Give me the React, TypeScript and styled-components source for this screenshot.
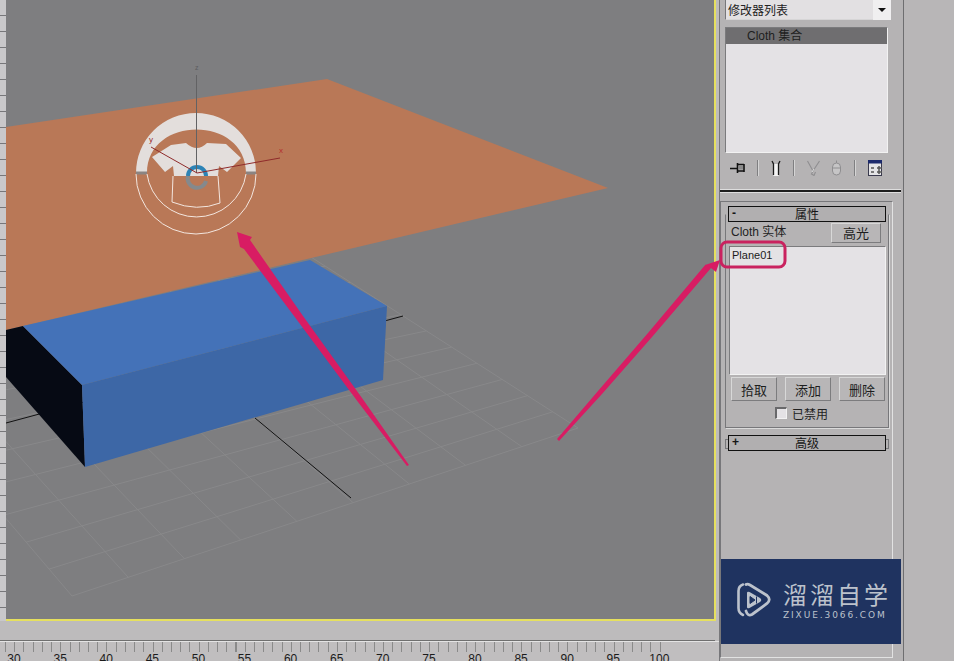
import * as React from "react";
import styled, { createGlobalStyle } from "styled-components";

const GlobalStyle = createGlobalStyle`
  html, body {
    margin: 0;
    padding: 0;
    width: 954px;
    height: 661px;
    overflow: hidden;
    background: #b8b6b7;
    font-family: "Liberation Sans", "Noto Sans CJK SC", sans-serif;
  }
`;

const Base = styled.div`
  position: relative;
  width: 954px;
  height: 661px;
  display: flex;
  overflow: hidden;
  background: #b8b6b7;
`;

const Workspace = styled.div`
  width: 719px;
  display: flex;
  flex-direction: column;
  background: #bdbbbc;
`;

const ViewRow = styled.div`
  display: flex;
  height: 621px;
`;

const SideRuler = styled.div`
  width: 6px;
  background: repeating-linear-gradient(
    to bottom,
    #c9c8ca 0,
    #c9c8ca 15px,
    #77777a 15px,
    #77777a 16px
  );
`;

const Viewport = styled.div`
  width: 708px;
  height: 619px;
  background: #7e7e80;
  border-right: 2px solid #e6e05e;
  border-bottom: 2px solid #e6e05e;
`;

const SceneSvg = styled.svg`
  display: block;
`;

const TrackGap = styled.div`
  height: 19px;
  margin-right: 4px;
  border-bottom: 1px solid #6f6f6f;
`;

const Timeline = styled.div`
  height: 20px;
  overflow: hidden;
  border-top: 1px solid #e4e4e4;
  background: #c0bebf;
`;

const Ticks = styled.div`
  width: 658px;
  height: 10px;
  margin-left: 5px;
  background: repeating-linear-gradient(
    to right,
    #8a8a8a 0,
    #8a8a8a 1px,
    transparent 1px,
    transparent 9.22px
  );
`;

const Labels = styled.div`
  display: flex;
  margin-left: -9px;
`;

const Label = styled.span`
  width: 46.1px;
  flex: none;
  text-align: center;
  font-size: 12px;
  line-height: 14px;
  color: #1b1b1b;
`;

const Panel = styled.div`
  position: relative;
  width: 185px;
  height: 661px;
  box-sizing: border-box;
  padding-bottom: 3px;
  display: flex;
  flex-direction: column;
  background: #b5b3b4;
  border-left: 1px solid #77777a;
  border-right: 1px solid #6e6e70;
`;

const TopSection = styled.div`
  padding-left: 5px;
`;

const Select = styled.div`
  width: 166px;
  height: 20px;
  box-sizing: border-box;
  display: flex;
  align-items: center;
  justify-content: space-between;
  padding-left: 2px;
  background: #e2e0e2;
  border-left: 1px solid #77777a;
  border-bottom: 1px solid #d6d5d6;
  font-size: 12px;
  color: #222;
`;

const SelectArrow = styled.span`
  width: 18px;
  height: 20px;
  display: flex;
  align-items: center;
  justify-content: center;
  background: #f0eff0;

  &::before {
    content: "";
    border-left: 4px solid transparent;
    border-right: 4px solid transparent;
    border-top: 4px solid #111;
  }
`;

const ListBox = styled.div<{ $height: number; $width: number }>`
  width: ${(p) => p.$width}px;
  height: ${(p) => p.$height}px;
  box-sizing: border-box;
  background: #e4e2e5;
  border: 1px solid;
  border-color: #7b7b7d #f2f2f2 #f2f2f2 #7b7b7d;
`;

const StackList = styled(ListBox)`
  margin-top: 7px;
`;

const StackRow = styled.div`
  height: 16px;
  padding-left: 21px;
  background: #6f6e70;
  font-size: 12px;
  line-height: 17px;
  color: #1e1e1e;
`;

const IconRow = styled.div`
  height: 16px;
  margin-top: 7px;
  padding-left: 5px;
  display: flex;
  align-items: center;
`;

const IconSep = styled.span`
  width: 1px;
  height: 16px;
  margin: 0 12px;
  background: #7f7f81;
  border-right: 1px solid #d5d5d5;
`;

const IconPair = styled.span`
  display: flex;
  gap: 11px;
`;

const Divider = styled.div`
  width: 181px;
  height: 2px;
  margin-top: 13px;
  background: #1e1e1e;
  border-top: 1px solid #dedede;
  border-bottom: 1px solid #dedede;
`;

const RolloutArea = styled.div`
  width: 173px;
  flex: 1;
  margin-top: 8px;
  box-sizing: border-box;
  padding: 4px 3px 0 4px;
  border: 1px solid #77777a;
  border-right-color: #e2e2e2;
  border-bottom-color: #e2e2e2;
`;

const RolloutHeader = styled.div<{ $collapsed?: boolean }>`
  position: relative;
  height: 16px;
  margin: 0 3px;
  box-sizing: border-box;
  padding: 0 3px 2px;
  display: flex;
  align-items: center;
  background: #b1afb0;
  border: 1px solid #111;
  font-size: 12px;
  color: #161616;

  ${(p) =>
    p.$collapsed &&
    `
    margin-top: 7px;
    &::before, &::after {
      content: "";
      position: absolute;
      top: 3px;
      width: 2px;
      height: 8px;
      border: 1px solid #77777a;
    }
    &::before { left: -4px; border-right: 0; }
    &::after { right: -4px; border-left: 0; }
  `}
`;

const HeaderSign = styled.span`
  width: 10px;
  font-weight: bold;
`;

const HeaderTitle = styled.span`
  flex: 1;
  text-align: center;
  padding-right: 10px;
`;

const GroupBox = styled.div`
  height: 214px;
  margin-top: -8px;
  box-sizing: border-box;
  padding: 8px 3px 0;
  border: 1px solid #77777a;
  border-top-color: #b5b3b4;
  box-shadow: 1px 1px 0 #dadada;
`;

const NodeHead = styled.div`
  height: 20px;
  padding: 0 4px 0 2px;
  display: flex;
  justify-content: space-between;
  font-size: 12px;
  line-height: 19px;
  color: #222;
`;

const NodeList = styled(ListBox)`
  margin-top: 3px;
  padding: 1px 2px;
  font-size: 11px;
  line-height: 14px;
  color: #1b1b1b;
`;

const PanelButton = styled.div<{ $wide?: boolean }>`
  width: ${(p) => (p.$wide ? 50 : 46)}px;
  height: ${(p) => (p.$wide ? 20 : 24)}px;
  box-sizing: border-box;
  display: flex;
  align-items: center;
  justify-content: center;
  background: #b8b6b7;
  border: 1px solid;
  border-color: #d8d8d8 #7c7c7e #7c7c7e #d8d8d8;
  font-size: 13px;
  color: #1e1e1e;
`;

const ButtonRow = styled.div`
  margin-top: 2px;
  padding-left: 2px;
  display: flex;
  gap: 8px;
`;

const CheckRow = styled.div`
  height: 14px;
  margin-top: 5px;
  padding-left: 46px;
  display: flex;
  align-items: center;
  gap: 5px;
  font-size: 12px;
  color: #222;
`;

const CheckBox = styled.span`
  width: 12px;
  height: 12px;
  box-sizing: border-box;
  background: #e4e2e5;
  border: 1px solid;
  border-width: 2px 1px 1px 2px;
  border-color: #68686a #f2f2f2 #f2f2f2 #68686a;
`;

const Watermark = styled.div`
  position: absolute;
  left: 1px;
  top: 559px;
  width: 180px;
  height: 85px;
  box-sizing: border-box;
  padding: 0 0 3px 16px;
  display: flex;
  align-items: center;
  gap: 12px;
  background: #1f3360;
`;

const BrandText = styled.div`
  display: flex;
  flex-direction: column;
  gap: 1px;
  color: #bcc2cc;
`;

const BrandName = styled.div`
  font-family: "Noto Sans CJK SC", sans-serif;
  font-size: 24px;
  line-height: 30px;
  font-weight: 400;
  letter-spacing: 3px;
  white-space: nowrap;
`;

const BrandUrl = styled.div`
  font-family: "DejaVu Sans", sans-serif;
  font-size: 9px;
  line-height: 11px;
  letter-spacing: 1.9px;
  white-space: nowrap;
`;

const Overlay = styled.svg`
  position: absolute;
  left: 0;
  top: 0;
  pointer-events: none;
`;

const lerp = (a: number[], b: number[], t: number) => [
  a[0] + (b[0] - a[0]) * t,
  a[1] + (b[1] - a[1]) * t,
];

// corners of the floor grid, the far ones are hidden behind the plane
const gridA = [72, 596];
const gridB = [578, 428];
const gridC = [300, 250];
const gridD = [-180, 300];

function GridLines() {
  const lines: number[][][] = [];
  for (let i = 0; i <= 9; i++) {
    lines.push([lerp(gridA, gridB, i / 9), lerp(gridD, gridC, i / 9)]);
  }
  for (let i = 0; i <= 11; i++) {
    lines.push([lerp(gridA, gridD, i / 11), lerp(gridB, gridC, i / 11)]);
  }
  return (
    <g stroke="#959596" strokeWidth="1" opacity="0.45">
      {lines.map((l, i) => (
        <line key={i} x1={l[0][0]} y1={l[0][1]} x2={l[1][0]} y2={l[1][1]} />
      ))}
    </g>
  );
}

function Gizmo() {
  return (
    <g>
      <path d="M136 173 A60 60 0 0 1 256 173 H246 C246 115 147 115 147 173 Z" fill="#e3dedc" />
      <path d="M136 173 H147 M246 173 H256" stroke="#8b8482" strokeWidth="3" />
      <path d="M136 174 A60 60 0 0 0 256 174 M147 174 A50 50 0 0 0 246 174" fill="none" stroke="#f3e6df" strokeWidth="1" />
      <path
        d="M152 157 L171 145 L186 143 Q197 153 207 143 L226 144 L241 158 L227 172 L219 166 L218 176 H174 L173 166 L165 172 Z"
        fill="#e3dedc"
      />
      <path d="M173 176 L172 202 Q197 212 220 203 L218 176" fill="none" stroke="#f3e6df" strokeWidth="1" />
      <path d="M188 176 A9 9 0 0 1 206 176" fill="none" stroke="#2c83b6" strokeWidth="4" />
      <path d="M188 176 A9 9 0 0 0 206 181" fill="none" stroke="#85898c" strokeWidth="4" />
      <line x1="196.5" y1="75" x2="196.5" y2="173" stroke="#626264" />
      <line x1="197" y1="173" x2="280" y2="158" stroke="#8f2b2b" />
      <line x1="197" y1="173" x2="151" y2="147" stroke="#8f2b2b" />
      <text x="195" y="70" fontSize="7" fill="#5d5d5f" fontFamily="Liberation Sans">z</text>
      <text x="279" y="153" fontSize="8" fill="#b32e2e" fontFamily="Liberation Sans">x</text>
      <text x="149" y="142" fontSize="8" fill="#9c2b2b" fontFamily="Liberation Sans">y</text>
    </g>
  );
}

function Scene() {
  return (
    <SceneSvg width="708" height="619" viewBox="6 0 708 619">
      <GridLines />
      <line x1="6" y1="423" x2="403" y2="316" stroke="#111" />
      <line x1="255" y1="418" x2="351" y2="498" stroke="#111" />
      <polygon points="327,79 608,188 6,330 6,127" fill="#b97857" />
      <polygon points="6,330 23,326 82,385 85,467 6,377" fill="#060a14" />
      <polygon points="23,326 310,260 387,306 82,385" fill="#4472b8" />
      <polygon points="82,385 387,306 383,380 85,467" fill="#3d67a6" />
      <Gizmo />
    </SceneSvg>
  );
}

function PinIcon() {
  return (
    <svg width="15" height="12" viewBox="0 0 15 12">
      <path d="M0 6.5 H7 M7.5 1 V11 M14 2 V10 M8 2.5 H14 M8 9 H14" stroke="#111" strokeWidth="1.6" fill="none" />
      <rect x="9" y="3.5" width="4" height="4" fill="#8a8a8a" />
    </svg>
  );
}

function SplitIcon() {
  return (
    <svg width="10" height="16" viewBox="0 0 10 16">
      <rect x="2.5" y="4" width="5" height="12" fill="#f4f4f4" />
      <path d="M1 1 L2.5 4 V15 M9 1 L7.5 4 V15" stroke="#1a1a1a" strokeWidth="1.3" fill="none" />
    </svg>
  );
}

function FunnelIcon() {
  return (
    <svg width="13" height="16" viewBox="0 0 13 16">
      <path d="M0.5 1 L6 11 L12.5 1 M6 11 L4.5 14 L7 15.5 L8.5 12" stroke="#8f8e90" strokeWidth="1.1" fill="none" />
      <path d="M5 12 L7 9" stroke="#dedede" strokeWidth="1" />
    </svg>
  );
}

function MouseIcon() {
  return (
    <svg width="11" height="16" viewBox="0 0 11 16">
      <rect x="1.5" y="3" width="8" height="12" rx="4" fill="#c6c5c6" stroke="#8f8e90" />
      <path d="M1.5 8 H9.5 M5.5 0.5 V3" stroke="#8f8e90" fill="none" />
    </svg>
  );
}

function ConfigIcon() {
  return (
    <svg width="15" height="16" viewBox="0 0 15 16">
      <rect x="0.5" y="0.5" width="13" height="15" fill="#e4e4e6" stroke="#3a3a4e" />
      <rect x="0" y="0" width="14" height="3.5" fill="#1c2a6c" />
      <path d="M3 8 H6 M3 12 H6 M9 8 H14 M9 12 H14 M11 6 V14" stroke="#555" strokeWidth="1.5" />
    </svg>
  );
}

function LogoMark() {
  return (
    <svg width="34" height="36" viewBox="0 0 34 36">
      <path d="M6 2.5 Q1.5 4 1.5 9 V26 Q1.5 31 6 33" fill="none" stroke="#bcc2cc" strokeWidth="2.6" strokeLinecap="round" />
      <path
        d="M9 2.5 Q10.5 1.5 13 3 L30 13.5 Q34.5 17.5 30 21.5 L15 32.5 Q10.5 34.5 9 29"
        fill="none"
        stroke="#bcc2cc"
        strokeWidth="2.8"
        strokeLinecap="round"
      />
      <path d="M10 11 Q10 9 12.5 10 L23 16 Q25.5 18 23 20 L12.5 26 Q10 27 10 25 Z" fill="#bcc2cc" />
      <path d="M13 14.5 L18 18 L13 21.5 Z M19.5 14.5 V21.5" fill="#1f3360" stroke="#1f3360" strokeWidth="1" />
    </svg>
  );
}

const rulerLabels = [30, 35, 40, 45, 50, 55, 60, 65, 70, 75, 80, 85, 90, 95, 100];

export default function App() {
  return (
    <Base>
      <GlobalStyle />
      <Workspace>
        <ViewRow>
          <SideRuler />
          <Viewport>
            <Scene />
          </Viewport>
        </ViewRow>
        <TrackGap />
        <Timeline>
          <Ticks />
          <Labels>
            {rulerLabels.map((n) => (
              <Label key={n}>{n}</Label>
            ))}
          </Labels>
        </Timeline>
      </Workspace>
      <Panel>
        <TopSection>
          <Select>
            修改器列表
            <SelectArrow />
          </Select>
          <StackList $width={163} $height={126}>
            <StackRow>Cloth 集合</StackRow>
          </StackList>
          <IconRow>
            <PinIcon />
            <IconSep />
            <SplitIcon />
            <IconSep />
            <IconPair>
              <FunnelIcon />
              <MouseIcon />
            </IconPair>
            <IconSep />
            <ConfigIcon />
          </IconRow>
        </TopSection>
        <Divider />
        <RolloutArea>
          <RolloutHeader>
            <HeaderSign>-</HeaderSign>
            <HeaderTitle>属性</HeaderTitle>
          </RolloutHeader>
          <GroupBox>
            <NodeHead>
              Cloth 实体
              <PanelButton $wide>高光</PanelButton>
            </NodeHead>
            <NodeList $width={157} $height={129}>Plane01</NodeList>
            <ButtonRow>
              <PanelButton>拾取</PanelButton>
              <PanelButton>添加</PanelButton>
              <PanelButton>删除</PanelButton>
            </ButtonRow>
            <CheckRow>
              <CheckBox />
              已禁用
            </CheckRow>
          </GroupBox>
          <RolloutHeader $collapsed>
            <HeaderSign>+</HeaderSign>
            <HeaderTitle>高级</HeaderTitle>
          </RolloutHeader>
        </RolloutArea>
        <Watermark>
          <LogoMark />
          <BrandText>
            <BrandName>溜溜自学</BrandName>
            <BrandUrl>ZIXUE.3066.COM</BrandUrl>
          </BrandText>
        </Watermark>
      </Panel>
      <Overlay width="954" height="661" viewBox="0 0 954 661">
        <polygon
          points="237,232 252,237 250,240 303,316 362,398 409,465 407,466 358,402 297,320 244,249 240,247"
          fill="#d81c63"
        />
        <polygon
          points="720,260 716,272 711,268 652,337 602,394 559,441 557,439 598,391 648,333 706,264 705,265"
          fill="#d81c63"
        />
        <rect x="721" y="242" width="64" height="25" rx="6" fill="none" stroke="#c9225f" strokeWidth="3" />
      </Overlay>
    </Base>
  );
}
